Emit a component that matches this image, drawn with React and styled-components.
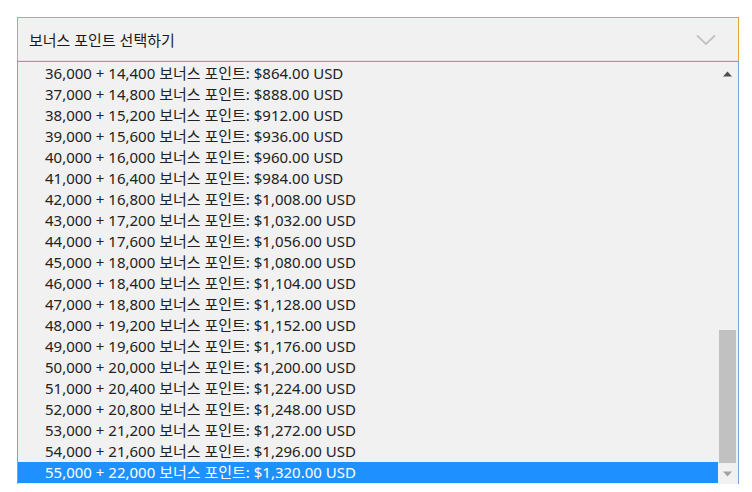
import styled, { createGlobalStyle } from 'styled-components'

const GlobalStyle = createGlobalStyle`
  html, body {
    margin: 0;
    padding: 0;
    background: #ffffff;
  }
  body {
    font-family: "Noto Sans", "Noto Sans CJK KR", sans-serif;
  }
`

const Page = styled.div`
  padding: 17px 0 0 17px;
  width: 722px;
`

const Header = styled.div`
  height: 44px;
  box-sizing: border-box;
  border: 1px solid #e3a53a;
  border-bottom: none;
  background: #f1f1f1;
  display: flex;
  align-items: center;
  justify-content: space-between;
  padding: 0 22px 0 11px;
  font-size: 15px;
  color: #1a1a1a;
  box-shadow: inset 0 -1px 0 #e2e2e2;
`

const ListBox = styled.div`
  border: 1px solid #7f9fdb;
  border-bottom: none;
  background: #f1f1f1;
  display: flex;
  height: 422px;
  overflow: hidden;
`

const Options = styled.ul`
  flex: 1;
  list-style: none;
  margin: 0;
  padding: 1px 0 0;
`

const Option = styled.li`
  height: 21px;
  line-height: 21px;
  padding-left: 27px;
  font-size: 15px;
  white-space: nowrap;
  color: ${p => (p.$selected ? '#ffffff' : '#222222')};
  background: ${p => (p.$selected ? '#1e90ff' : 'transparent')};
`

const Track = styled.div`
  width: 20px;
  display: flex;
  flex-direction: column;
  padding-top: 1px;
`

const ArrowBox = styled.div`
  height: 21px;
  display: flex;
  align-items: center;
  justify-content: center;
  padding-right: 2px;
`

const Filler = styled.div`
  flex: 1;
`

const Thumb = styled.div`
  height: 133px;
  width: 17px;
  margin-left: 1px;
  background: #c1c1c1;
`

const rows = Array.from({ length: 20 }, (_, i) => {
  const base = 36000 + i * 1000
  const bonus = base * 0.4
  const price = base * 0.024
  return {
    base: base.toLocaleString('en-US'),
    bonus: bonus.toLocaleString('en-US'),
    price: price.toLocaleString('en-US', { minimumFractionDigits: 2, maximumFractionDigits: 2 }),
  }
})

const Chevron = () => (
  <svg width="20" height="12" viewBox="0 0 20 12">
    <path d="M1 1.5 L10 10 L19 1.5" fill="none" stroke="#c2c2c2" strokeWidth="1.8" />
  </svg>
)

const Arrow = ({ up, color }) => (
  <svg width="9" height="6" viewBox="0 0 9 6">
    <path d={up ? 'M0 5.5 L4.5 0.5 L9 5.5 Z' : 'M0 0.5 L9 0.5 L4.5 5.5 Z'} fill={color} />
  </svg>
)

export default function App() {
  return (
    <>
      <GlobalStyle />
      <Page>
        <Header>
          <span>보너스 포인트 선택하기</span>
          <Chevron />
        </Header>
        <ListBox>
          <Options>
            {rows.map((r, i) => (
              <Option key={r.base} $selected={i === rows.length - 1}>
                {r.base} + {r.bonus} 보너스 포인트: ${r.price} USD
              </Option>
            ))}
          </Options>
          <Track>
            <ArrowBox>
              <Arrow up color="#505050" />
            </ArrowBox>
            <Filler />
            <Thumb />
            <ArrowBox>
              <Arrow color="#a3a3a3" />
            </ArrowBox>
          </Track>
        </ListBox>
      </Page>
    </>
  )
}
